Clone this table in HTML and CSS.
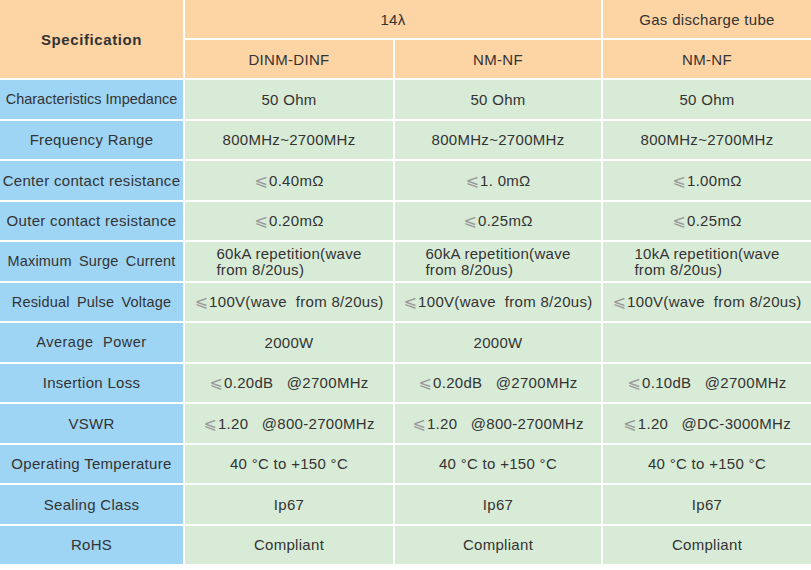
FILE: index.html
```html
<!DOCTYPE html>
<html>
<head>
<meta charset="utf-8">
<link rel="stylesheet" href="styles.css">
</head>
<body>
<div class="spec">
  <div class="cell head spec-title">Specification</div>
  <div class="cell head span2">14λ</div>
  <div class="cell head">Gas discharge tube</div>
  <div class="cell head">DINM-DINF</div>
  <div class="cell head">NM-NF</div>
  <div class="cell head">NM-NF</div>

  <div class="cell label tight">Characteristics Impedance</div>
  <div class="cell val">50 Ohm</div>
  <div class="cell val">50 Ohm</div>
  <div class="cell val">50 Ohm</div>

  <div class="cell label">Frequency Range</div>
  <div class="cell val">800MHz~2700MHz</div>
  <div class="cell val">800MHz~2700MHz</div>
  <div class="cell val">800MHz~2700MHz</div>

  <div class="cell label">Center contact resistance</div>
  <div class="cell val"><span class="le">⩽</span>0.40mΩ</div>
  <div class="cell val"><span class="le">⩽</span>1. 0mΩ</div>
  <div class="cell val"><span class="le">⩽</span>1.00mΩ</div>

  <div class="cell label">Outer contact resistance</div>
  <div class="cell val"><span class="le">⩽</span>0.20mΩ</div>
  <div class="cell val"><span class="le">⩽</span>0.25mΩ</div>
  <div class="cell val"><span class="le">⩽</span>0.25mΩ</div>

  <div class="cell label wide">Maximum Surge Current</div>
  <div class="cell val"><span class="multi">60kA repetition(wave<br>from 8/20us)</span></div>
  <div class="cell val"><span class="multi">60kA repetition(wave<br>from 8/20us)</span></div>
  <div class="cell val"><span class="multi">10kA repetition(wave<br>from 8/20us)</span></div>

  <div class="cell label wide">Residual Pulse Voltage</div>
  <div class="cell val pre"><span class="le">⩽</span>100V(wave  from 8/20us)</div>
  <div class="cell val pre"><span class="le">⩽</span>100V(wave  from 8/20us)</div>
  <div class="cell val pre"><span class="le">⩽</span>100V(wave  from 8/20us)</div>

  <div class="cell label wide wider">Average Power</div>
  <div class="cell val">2000W</div>
  <div class="cell val">2000W</div>
  <div class="cell val"></div>

  <div class="cell label">Insertion Loss</div>
  <div class="cell val pre"><span class="le">⩽</span>0.20dB   @2700MHz</div>
  <div class="cell val pre"><span class="le">⩽</span>0.20dB   @2700MHz</div>
  <div class="cell val pre"><span class="le">⩽</span>0.10dB   @2700MHz</div>

  <div class="cell label">VSWR</div>
  <div class="cell val pre"><span class="le">⩽</span>1.20   @800-2700MHz</div>
  <div class="cell val pre"><span class="le">⩽</span>1.20   @800-2700MHz</div>
  <div class="cell val pre"><span class="le">⩽</span>1.20   @DC-3000MHz</div>

  <div class="cell label">Operating Temperature</div>
  <div class="cell val">40 °C to +150 °C</div>
  <div class="cell val">40 °C to +150 °C</div>
  <div class="cell val">40 °C to +150 °C</div>

  <div class="cell label">Sealing Class</div>
  <div class="cell val">Ip67</div>
  <div class="cell val">Ip67</div>
  <div class="cell val">Ip67</div>

  <div class="cell label">RoHS</div>
  <div class="cell val">Compliant</div>
  <div class="cell val">Compliant</div>
  <div class="cell val">Compliant</div>
</div>
</body>
</html>
```
FILE: styles.css
```css
html, body {
  margin: 0;
  padding: 0;
  background: #ffffff;
}
.spec {
  display: grid;
  grid-template-columns: 183px 208px 206px 208px;
  grid-template-rows: 38px 38px repeat(12, 38.5px);
  gap: 2px;
  font-family: "Liberation Sans", Arial, sans-serif;
  font-size: 14.5px;
  color: #333333;
}
.cell {
  display: flex;
  align-items: center;
  justify-content: center;
  text-align: center;
  white-space: nowrap;
}
.head {
  background: #fdd4a3;
  font-size: 15px;
  letter-spacing: 0.3px;
}
.spec-title {
  grid-row: span 2;
  font-weight: bold;
  font-size: 15px;
  letter-spacing: 0.6px;
}
.span2 {
  grid-column: span 2;
}
.label {
  background: #9ed5f5;
  font-size: 15px;
  letter-spacing: 0.3px;
}
.label.tight {
  font-size: 14.5px;
  letter-spacing: 0;
}
.label.wide {
  font-size: 14.5px;
  word-spacing: 3px;
  letter-spacing: 0.2px;
}
.label.wider {
  letter-spacing: 0.5px;
  word-spacing: 5px;
}
.val {
  background: #d8ebd7;
  font-size: 15px;
  letter-spacing: 0.3px;
}
.pre {
  white-space: pre;
}
.le {
  font-family: "DejaVu Sans", sans-serif;
  color: #9a9a9a;
  font-size: 16px;
  margin-right: 1px;
}
.multi {
  display: inline-block;
  text-align: left;
  line-height: 16px;
  padding-top: 2px;
}
```
